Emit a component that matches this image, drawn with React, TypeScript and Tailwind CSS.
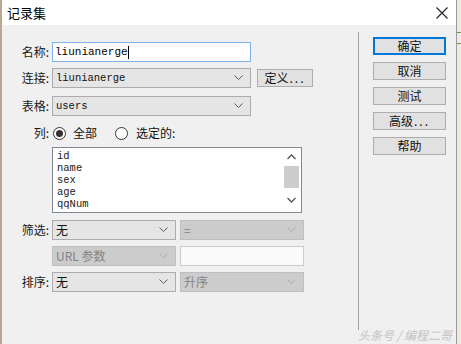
import React from "react";

const cjk = { fontFamily: '"Noto Sans CJK SC", "Noto Sans", sans-serif' };
const mono = { fontFamily: '"Liberation Mono", "Noto Sans CJK SC", monospace' };

function Chevron({ color = "#5a5a5a" }: { color?: string }) {
  return (
    <svg width="9" height="6" viewBox="0 0 9 6" className="shrink-0">
      <polyline points="0.5,0.5 4.5,4.5 8.5,0.5" fill="none" stroke={color} strokeWidth="1" />
    </svg>
  );
}

function Label({ text }: { text: string }) {
  return (
    <div className="w-[48px] text-right text-[12px] text-[#1a1a1a] pr-[1px] leading-none" style={cjk}>
      {text}
    </div>
  );
}

function Select({
  value,
  width,
  disabled = false,
  monoFont = false,
  h = 20,
}: {
  value: string;
  width: number;
  disabled?: boolean;
  monoFont?: boolean;
  h?: number;
}) {
  return (
    <div
      className={
        "flex items-center justify-between pl-[3px] pr-[7px] border " +
        (disabled ? "bg-[#cccccc] border-[#bfbfbf] text-[#838383]" : "bg-[#e5e5e5] border-[#acacac] text-[#111]")
      }
      style={{ width, height: h }}
    >
      <span className={monoFont ? "text-[10.5px] leading-none" : "text-[12px] leading-none"} style={monoFont ? mono : cjk}>
        {value}
      </span>
      <Chevron color={disabled ? "#aaaaaa" : "#5a5a5a"} />
    </div>
  );
}

function Btn({ children, primary = false }: { children: React.ReactNode; primary?: boolean }) {
  return (
    <div
      className={
        "w-[73px] h-[18px] flex items-center justify-center bg-[#e1e1e1] text-[12px] text-[#111] leading-none " +
        (primary ? "border-2 border-[#0078d7]" : "border border-[#adadad]")
      }
      style={cjk}
    >
      {children}
    </div>
  );
}

export default function App() {
  const items = ["id", "name", "sex", "age", "qqNum"];
  return (
    <div className="w-[461px] h-[344px] flex overflow-hidden bg-[#f0f0f0]">
      <div className="w-[2px] h-full bg-[#bba98f]" />
      <div className="w-[454px] h-full flex flex-col relative">
        {/* title bar */}
        <div className="h-[25px] bg-white flex items-center justify-between pl-[5px] pr-[8px]">
          <span className="text-[13px] text-black leading-none" style={cjk}>
            记录集
          </span>
          <svg width="12" height="12" viewBox="0 0 12 12">
            <path d="M0.5 0.5 L11.5 11.5 M11.5 0.5 L0.5 11.5" stroke="#222" strokeWidth="1.1" />
          </svg>
        </div>
        {/* body */}
        <div className="flex-1 flex bg-[#f0f0f0]">
          {/* form */}
          <div className="w-[356px] flex flex-col pt-[17px]">
            {/* 名称 */}
            <div className="flex items-center gap-[2px] h-[20px]">
              <Label text="名称:" />
              <div className="w-[199px] h-[20px] bg-white border border-[#7eb4ea] flex items-center pl-[2px]">
                <span className="text-[11px] leading-none text-black" style={mono}>
                  liunianerge
                </span>
                <span className="w-[1px] h-[13px] bg-black" />
              </div>
            </div>
            {/* 连接 */}
            <div className="flex items-center gap-[2px] h-[20px] mt-[6px]">
              <Label text="连接:" />
              <Select value="liunianerge" width={199} monoFont />
              <div
                className="ml-[4px] w-[56px] h-[18px] bg-[#e1e1e1] border border-[#adadad] flex items-center justify-center text-[12px] leading-none text-[#111]"
                style={cjk}
              >
                定义<span className="tracking-[2px] ml-[1px]">...</span>
              </div>
            </div>
            {/* 表格 */}
            <div className="flex items-center gap-[2px] h-[20px] mt-[8px]">
              <Label text="表格:" />
              <Select value="users" width={199} monoFont />
            </div>
            {/* 列 */}
            <div className="flex items-center h-[14px] mt-[10px]">
              <Label text="列:" />
              <div className="ml-[3px] w-[13px] h-[13px] rounded-full border border-[#333] flex items-center justify-center bg-white">
                <div className="w-[7px] h-[7px] rounded-full bg-[#333]" />
              </div>
              <span className="ml-[7px] text-[12px] leading-none text-[#111]" style={cjk}>
                全部
              </span>
              <div className="ml-[18px] w-[13px] h-[13px] rounded-full border border-[#333] bg-white" />
              <span className="ml-[8px] text-[12px] leading-none text-[#111]" style={cjk}>
                选定的:
              </span>
            </div>
            {/* list box */}
            <div className="ml-[50px] mt-[7px] w-[250px] h-[66px] bg-white border border-[#828790] flex">
              <div className="flex-1 flex flex-col pl-[4px] pt-[2px]">
                {items.map((it) => (
                  <div key={it} className="h-[12px] text-[10.5px] leading-[12px] text-[#222]" style={mono}>
                    {it}
                  </div>
                ))}
              </div>
              <div className="w-[17px] mr-[1px] flex flex-col items-center bg-white">
                <div className="h-[18px] flex items-center justify-center">
                  <svg width="9" height="6" viewBox="0 0 9 6">
                    <polyline points="0.5,5 4.5,1 8.5,5" fill="none" stroke="#555" strokeWidth="1.3" />
                  </svg>
                </div>
                <div className="w-[15px] h-[22px] bg-[#cdcdcd]" />
                <div className="flex-1 flex items-center justify-center">
                  <svg width="9" height="6" viewBox="0 0 9 6">
                    <polyline points="0.5,1 4.5,5 8.5,1" fill="none" stroke="#555" strokeWidth="1.3" />
                  </svg>
                </div>
              </div>
            </div>
            {/* 筛选 */}
            <div className="flex items-center gap-[2px] mt-[7px]">
              <Label text="筛选:" />
              <Select value="无" width={124} />
              <div className="ml-[2px]">
                <Select value="=" width={124} disabled />
              </div>
            </div>
            {/* URL 参数 */}
            <div className="flex items-center gap-[2px] mt-[6px]">
              <div className="w-[48px]" />
              <Select value="URL 参数" width={124} disabled />
              <div className="ml-[2px] w-[124px] h-[20px] bg-[#fafafa] border border-[#cccccc]" />
            </div>
            {/* 排序 */}
            <div className="flex items-center gap-[2px] mt-[6px]">
              <Label text="排序:" />
              <Select value="无" width={124} />
              <div className="ml-[2px]">
                <Select value="升序" width={124} disabled />
              </div>
            </div>
          </div>
          {/* separator */}
          <div className="w-[1px] mt-[7px] h-[298px] bg-[#a0a0a0]" />
          {/* buttons */}
          <div className="ml-[14px] pt-[12px] flex flex-col gap-[7px]">
            <Btn primary>确定</Btn>
            <Btn>取消</Btn>
            <Btn>测试</Btn>
            <Btn>
              高级<span className="tracking-[2px] ml-[1px]">...</span>
            </Btn>
            <Btn>帮助</Btn>
          </div>
        </div>
        <div
          className="absolute right-[4px] bottom-[3px] text-[12px] leading-none text-[#c4c4c4] italic"
          style={cjk}
        >
          头条号 / 编程二哥
        </div>
      </div>
      <div className="flex-1 h-full bg-[#ecebdc] border-l border-[#9a9a9a] flex flex-col">
        <div className="h-[32px]" />
        <div className="h-[1px] bg-[#6a9a4a]" />
        <div className="h-[10px]" />
        <div className="h-[1px] bg-[#6a9a4a]" />
      </div>
    </div>
  );
}
